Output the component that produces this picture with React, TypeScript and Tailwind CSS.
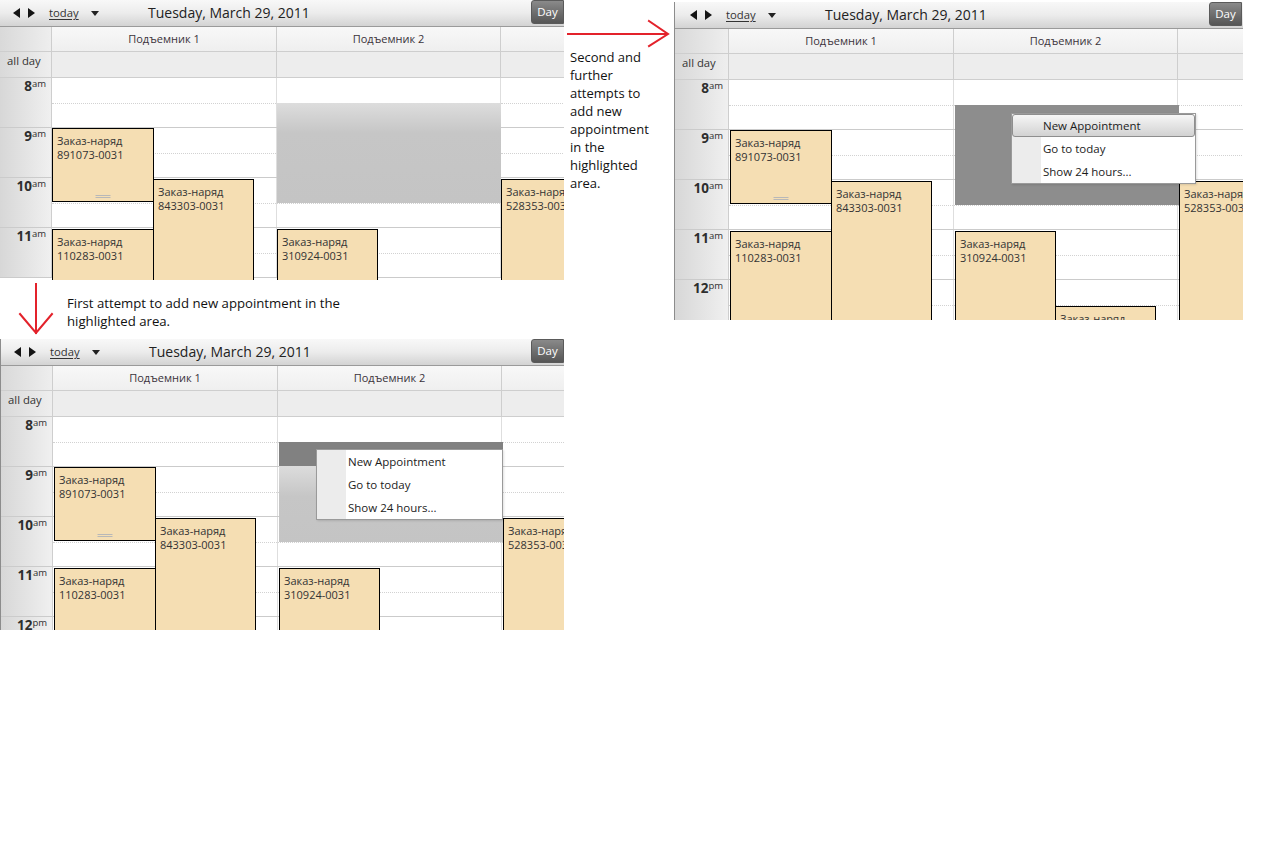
import React from "react";

type Variant = "a" | "b" | "c";

type Ev = { x: number; y: number; w: number; h: number; code?: string; grip?: boolean };

// Appointment boxes, in the coordinates of the plain (unframed) calendar.
const EVENTS: Ev[] = [
  { x: 52, y: 128, w: 102, h: 74, code: "891073-0031", grip: true },
  { x: 153, y: 179, w: 101, h: 200, code: "843303-0031" },
  { x: 52, y: 229, w: 102, h: 200, code: "110283-0031" },
  { x: 277, y: 229, w: 101, h: 200, code: "310924-0031" },
  { x: 501, y: 179, w: 101, h: 200, code: "528353-0031" },
];

const EXTRA_B: Ev[] = [{ x: 377, y: 304, w: 101, h: 200 }];

const HOURS: [string, string][] = [
  ["8", "am"],
  ["9", "am"],
  ["10", "am"],
  ["11", "am"],
  ["12", "pm"],
];

const CFG: Record<
  Variant,
  { box: string; gutter: string; shift: number; bar: string; day: string; rows: number }
> = {
  a: {
    box: "relative h-[280px] w-[564px] overflow-hidden bg-white",
    gutter: "w-[52px]",
    shift: 0,
    bar: "pl-[13px]",
    day: "mr-0",
    rows: 4,
  },
  b: {
    box: "relative h-[318px] w-[569px] overflow-hidden border-l border-[#8c8c8c] bg-white",
    gutter: "w-[54px]",
    shift: 3,
    bar: "pl-[15px]",
    day: "mr-[1px]",
    rows: 5,
  },
  c: {
    box: "relative h-[291px] w-[564px] overflow-hidden border-l border-[#8c8c8c] bg-white",
    gutter: "w-[52px]",
    shift: 1,
    bar: "pl-[13px]",
    day: "mr-0",
    rows: 5,
  },
};

function Toolbar({ v }: { v: Variant }) {
  const c = CFG[v];
  return (
    <div
      className={`flex h-[27px] items-center whitespace-nowrap border-b border-[#9a9a9a] bg-gradient-to-b from-[#f8f8f8] via-[#ececec] to-[#d3d3d3] ${c.bar}`}
    >
      <div className="flex shrink-0 items-center gap-[8px]">
        <svg width="7" height="10" viewBox="0 0 7 10">
          <path d="M7 0 L0 5 L7 10 Z" fill="#141414" />
        </svg>
        <svg width="7" height="10" viewBox="0 0 7 10">
          <path d="M0 0 L7 5 L0 10 Z" fill="#141414" />
        </svg>
      </div>
      <span className="ml-[14px] w-[31px] shrink-0 text-[11.3px] leading-[14px] text-[#333] underline underline-offset-2">
        today
      </span>
      <svg className="ml-[11px] shrink-0" width="8" height="5" viewBox="0 0 8 5">
        <path d="M0 0 H8 L4 5 Z" fill="#222" />
      </svg>
      <span className="ml-[49px] shrink-0 text-[14px] leading-[18px] text-[#222]">
        Tuesday, March 29, 2011
      </span>
      <div
        className={`ml-auto flex h-[24px] w-[33px] shrink-0 items-center justify-center self-start rounded-l-[3px] border border-[#5a5a5a] bg-gradient-to-b from-[#8a8a8a] to-[#565656] text-[11.5px] text-white ${c.day}`}
      >
        Day
      </div>
    </div>
  );
}

function ContextMenu({
  x,
  y,
  w,
  active,
}: {
  x: number;
  y: number;
  w: number;
  active: boolean;
}) {
  const items = ["New Appointment", "Go to today", "Show 24 hours..."];
  return (
    <div
      className="absolute whitespace-nowrap border border-[#9a9a9a] bg-[linear-gradient(to_right,#ececec_29px,#ffffff_29px)] text-[11.5px] text-[#1c1c1c] shadow-[1px_1px_2px_rgba(0,0,0,0.12)]"
      style={{ left: x, top: y, width: w }}
    >
      {items.map((t, i) =>
        i === 0 && active ? (
          <div
            key={t}
            className="flex h-[23px] items-center rounded-[3px] border border-[#8e8e8e] bg-gradient-to-b from-[#f6f6f6] to-[#d2d2d2] pl-[30px]"
          >
            {t}
          </div>
        ) : (
          <div key={t} className="flex h-[23px] items-center pl-[31px]">
            {t}
          </div>
        )
      )}
    </div>
  );
}

function Calendar({ v }: { v: Variant }) {
  const c = CFG[v];
  const s = c.shift;
  const events = v === "b" ? [...EVENTS, ...EXTRA_B] : EVENTS;
  return (
    <div className={c.box}>
      <Toolbar v={v} />

      {/* resource header */}
      <div className="flex h-[25px] whitespace-nowrap border-b border-[#cecece] bg-gradient-to-b from-[#f8f8f8] to-[#efefef] text-[11px] text-[#3b333b]">
        <div
          className={`${c.gutter} shrink-0 border-r border-[#cecece] bg-gradient-to-r from-[#d9d9d9] to-[#eeeeee]`}
        />
        <div className="flex w-[225px] shrink-0 items-center justify-center border-r border-[#cecece]">
          Подъемник 1
        </div>
        <div className="flex w-[224px] shrink-0 items-center justify-center border-r border-[#cecece]">
          Подъемник 2
        </div>
        <div className="w-[224px] shrink-0" />
      </div>

      {/* all-day row */}
      <div className="flex h-[26px] whitespace-nowrap border-b border-[#cecece] bg-[#ededed] text-[11.3px] text-[#333]">
        <div
          className={`${c.gutter} shrink-0 border-r border-[#cecece] bg-gradient-to-r from-[#d9d9d9] to-[#eeeeee] pl-[7px] pt-[1px] leading-[16px]`}
        >
          all day
        </div>
        <div className="w-[225px] shrink-0 border-r border-[#cecece]" />
        <div className="w-[224px] shrink-0 border-r border-[#cecece]" />
        <div className="w-[224px] shrink-0" />
      </div>

      {/* hour rows */}
      {HOURS.slice(0, c.rows).map(([h, sfx]) => (
        <div key={h} className="flex h-[50px] border-b border-[#cbcbcb]">
          <div
            className={`${c.gutter} flex shrink-0 items-start justify-end whitespace-nowrap border-r border-[#cecece] bg-gradient-to-r from-[#d7d7d7] to-[#f0f0f0] pr-[5px] pt-[1px] text-[#2e2e2e]`}
          >
            <span className="text-[13.5px] font-bold leading-[15px]">{h}</span>
            <span className="text-[9.5px] leading-[10px]">{sfx}</span>
          </div>
          <div className="w-[225px] shrink-0 border-r border-[#dedede]">
            <div className="h-[26px] border-b border-dotted border-[#d2d2d2]" />
          </div>
          <div className="w-[224px] shrink-0 border-r border-[#dedede]">
            <div className="h-[26px] border-b border-dotted border-[#d2d2d2]" />
          </div>
          <div className="w-[224px] shrink-0">
            <div className="h-[26px] border-b border-dotted border-[#d2d2d2]" />
          </div>
        </div>
      ))}

      {/* selected time range */}
      {v === "a" && (
        <div className="absolute left-[277px] top-[103px] h-[100px] w-[224px] bg-gradient-to-b from-[#dddddd] via-[#c6c6c6] via-30% to-[#c4c4c4]" />
      )}
      {v === "b" && (
        <div className="absolute left-[280px] top-[103px] h-[100px] w-[224px] bg-[#8d8d8d]" />
      )}
      {v === "c" && (
        <div className="absolute left-[278px] top-[103px] flex h-[100px] w-[224px] flex-col">
          <div className="h-[24px] bg-[#818181]" />
          <div className="flex-1 bg-gradient-to-b from-[#dcdcdc] via-[#c6c6c6] via-40% to-[#c4c4c4]" />
        </div>
      )}

      {/* appointments */}
      {events.map((e, i) => (
        <div
          key={i}
          className="absolute whitespace-nowrap border border-black bg-[#f5deb3] pl-[4px] pt-[5px] text-[11px] leading-[14px] text-[#333]"
          style={{ left: e.x + s, top: e.y, width: e.w, height: e.h }}
        >
          <div>Заказ-наряд</div>
          {e.code && <div>{e.code}</div>}
          {e.grip && (
            <div className="absolute bottom-[3px] left-1/2 h-[3px] w-[15px] -translate-x-1/2 border-y border-[#b8b8b8]" />
          )}
        </div>
      ))}

      {v === "b" && <ContextMenu x={336} y={111} w={185} active />}
      {v === "c" && <ContextMenu x={315} y={110} w={187} active={false} />}
    </div>
  );
}

export default function App() {
  return (
    <div className="h-[844px] w-[1265px] overflow-hidden bg-white font-['Open_Sans','Noto_Sans',sans-serif]">
      <div className="flex items-start">
        <div className="flex w-[564px] shrink-0 flex-col">
          <Calendar v="a" />
          <div className="flex h-[59px]">
            <svg className="shrink-0" width="60" height="59" viewBox="0 0 60 59">
              <g stroke="#e3222b" strokeWidth="2" fill="none" strokeLinecap="square">
                <path d="M36 4 V53" />
                <path d="M20 34 L36 53 L52 34" />
              </g>
            </svg>
            <div className="ml-[7px] whitespace-nowrap pt-[14px] text-[13.2px] leading-[18px] text-[#111]">
              First attempt to add new appointment in the
              <br />
              highlighted area.
            </div>
          </div>
          <Calendar v="c" />
        </div>

        <div className="w-[110px] shrink-0">
          <svg width="110" height="48" viewBox="0 0 110 48">
            <g stroke="#e3222b" strokeWidth="2" fill="none" strokeLinecap="square">
              <path d="M4 34 H103" />
              <path d="M85 21 L104 34 L85 46" />
            </g>
          </svg>
          <div className="whitespace-nowrap pl-[6px] text-[13px] leading-[18px] text-[#111]">
            Second and
            <br />
            further
            <br />
            attempts to
            <br />
            add new
            <br />
            appointment
            <br />
            in the
            <br />
            highlighted
            <br />
            area.
          </div>
        </div>

        <div className="shrink-0 pt-[2px]">
          <Calendar v="b" />
        </div>
      </div>
    </div>
  );
}
